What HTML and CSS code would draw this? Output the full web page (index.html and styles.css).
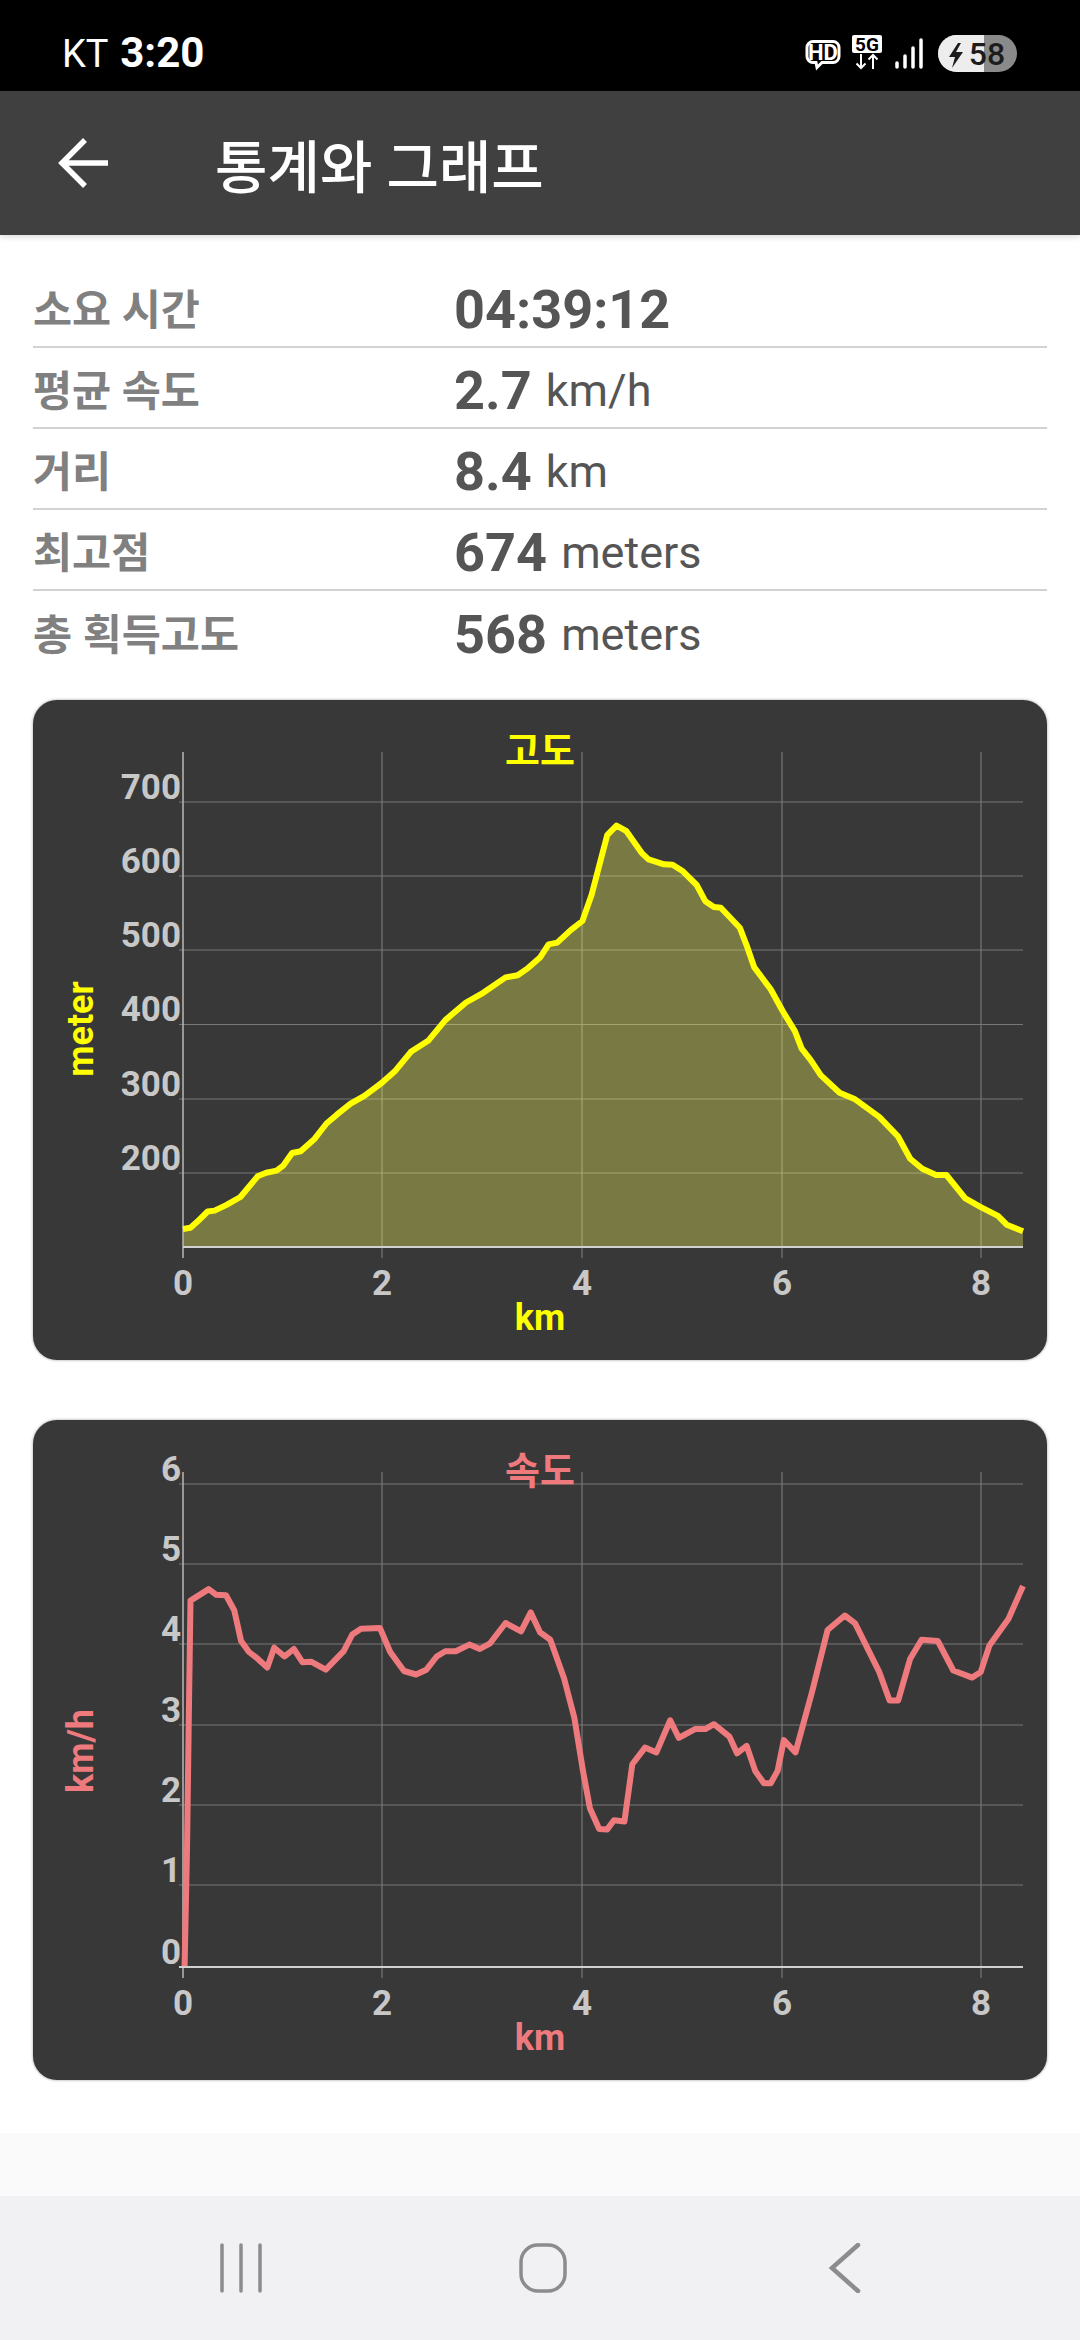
FILE: index.html
```html
<!DOCTYPE html>
<html lang="ko">
<head>
    <meta charset="UTF-8">
    <meta name="viewport" content="width=device-width, initial-scale=1.0">
    <title>통계와 그래프</title>
    <link rel="stylesheet" href="styles.css">
</head>
<body>
    <div class="status-bar">
        <div class="status-left"><span class="carrier">KT</span> <span class="clock">3:20</span></div>
        <svg class="status-icons" viewBox="800 30 222 46" width="222" height="46">
            <path class="hd-bubble" d="M813 41.500h20a6 6 0 0 1 6 6v9a6 6 0 0 1-6 6h-11l-5 5-1-5h-3a6 6 0 0 1-6-6v-9a6 6 0 0 1 6-6z"/>
            <text class="hd-text" x="823" y="60" text-anchor="middle">HD</text>
            <rect class="fiveg-box" x="852" y="35" width="30" height="18" rx="2"/>
            <text class="fiveg-text" x="867" y="51" text-anchor="middle">5G</text>
            <path class="net-arrows" d="M861 54v14m-4.500-4.500l4.500 4.500 4.500-4.500M873 69v-14m-4.500 4.500l4.500-4.500 4.500 4.500"/>
            <path class="signal" d="M897 63v4M905 56v11M913 48v19M921 40v27"/>
            <rect class="batt-dark" x="938" y="35" width="79" height="37" rx="18.500"/>
            <path class="batt-light" d="M956.500 35H984V72H956.500a18.500 18.500 0 0 1 0-37z"/>
            <path class="batt-bolt" d="M958 43l-9 14h6l-3 11 11-16h-7l5-9z"/>
            <text class="batt-text" x="987" y="65" text-anchor="middle">58</text>
        </svg>
    </div>

    <div class="toolbar">
        <svg class="back-icon" viewBox="0 0 52 52" width="52" height="52">
            <path d="M50 26H5M27 3L4 26l23 23"/>
        </svg>
        <h1 class="toolbar-title">통계와 그래프</h1>
    </div>

    <main class="content">
        <div class="stats">
            <div class="stat-row">
                <span class="stat-label">소요 시간</span>
                <span class="stat-value"><b>04:39:12</b></span>
            </div>
            <div class="stat-row">
                <span class="stat-label">평균 속도</span>
                <span class="stat-value"><b>2.7</b> <span class="stat-unit">km/h</span></span>
            </div>
            <div class="stat-row">
                <span class="stat-label">거리</span>
                <span class="stat-value"><b>8.4</b> <span class="stat-unit">km</span></span>
            </div>
            <div class="stat-row">
                <span class="stat-label">최고점</span>
                <span class="stat-value"><b>674</b> <span class="stat-unit">meters</span></span>
            </div>
            <div class="stat-row">
                <span class="stat-label">총 획득고도</span>
                <span class="stat-value"><b>568</b> <span class="stat-unit">meters</span></span>
            </div>
        </div>

        <!-- elevation chart, viewBox uses screen coordinates -->
        <div class="chart-card">
            <svg class="chart" viewBox="33 700 1014 660" width="1014" height="660">
                <path class="grid" d="M179 802H1023M179 876H1023M179 950H1023M179 1024.500H1023M179 1099H1023M179 1173H1023"/>
                <path class="grid" d="M382 752V1258M582 752V1258M782 752V1258M981 752V1258"/>
                <polygon class="elev-fill" points="183,1229 190.500,1227.800 197.400,1221.600 207.700,1211.500 214.600,1210.600 226.600,1204.900 240.400,1197 257.600,1176.300 266.200,1172.800 276.600,1170.600 283.500,1165.300 292.100,1153 300.700,1151.200 314.500,1138.900 326.500,1123.500 336.800,1114.700 350.600,1103.700 364.400,1095.800 381.600,1083 395.400,1070.700 410.900,1051.800 428.100,1040.800 445.300,1020.100 466,1002.500 483.200,992.800 505.600,977.400 517.700,975.200 528,968.100 540,957.600 548.600,944.400 557.200,942.600 571,929.900 582.400,921 591.700,894.600 600.300,861.600 607.200,835.200 616.500,825.600 626.100,830.800 641.600,852.800 648.500,859.400 664,864.300 672.600,864.700 682.900,871.300 696.700,885 705.300,901.200 713.900,907 720.800,907.800 739.800,927.700 746.600,945.300 754.200,967.300 770.700,989.300 782.800,1011.300 794.900,1031.100 801.700,1048.700 810.400,1059.700 820.700,1075.100 839.600,1092.700 855.100,1099.300 879.200,1116.900 898.200,1136.700 910.200,1158.700 922.300,1168.800 936.100,1175 946.400,1175 965.300,1198.300 980.800,1207.100 998,1215.900 1006.700,1224.700 1023,1231.300 1023,1247 183,1247"/>
                <path class="axis-y" d="M183 752V1258"/>
                <path class="axis-x" d="M183 1247H1023"/>
                <polyline class="line line-elev" points="183,1229 190.500,1227.800 197.400,1221.600 207.700,1211.500 214.600,1210.600 226.600,1204.900 240.400,1197 257.600,1176.300 266.200,1172.800 276.600,1170.600 283.500,1165.300 292.100,1153 300.700,1151.200 314.500,1138.900 326.500,1123.500 336.800,1114.700 350.600,1103.700 364.400,1095.800 381.600,1083 395.400,1070.700 410.900,1051.800 428.100,1040.800 445.300,1020.100 466,1002.500 483.200,992.800 505.600,977.400 517.700,975.200 528,968.100 540,957.600 548.600,944.400 557.200,942.600 571,929.900 582.400,921 591.700,894.600 600.300,861.600 607.200,835.200 616.500,825.600 626.100,830.800 641.600,852.800 648.500,859.400 664,864.300 672.600,864.700 682.900,871.300 696.700,885 705.300,901.200 713.900,907 720.800,907.800 739.800,927.700 746.600,945.300 754.200,967.300 770.700,989.300 782.800,1011.300 794.900,1031.100 801.700,1048.700 810.400,1059.700 820.700,1075.100 839.600,1092.700 855.100,1099.300 879.200,1116.900 898.200,1136.700 910.200,1158.700 922.300,1168.800 936.100,1175 946.400,1175 965.300,1198.300 980.800,1207.100 998,1215.900 1006.700,1224.700 1023,1231.300"/>
                <g class="tick tick-y">
                    <text x="181" y="799">700</text>
                    <text x="181" y="873">600</text>
                    <text x="181" y="947">500</text>
                    <text x="181" y="1021">400</text>
                    <text x="181" y="1096">300</text>
                    <text x="181" y="1170">200</text>
                </g>
                <g class="tick tick-x">
                    <text x="183" y="1295">0</text>
                    <text x="382" y="1295">2</text>
                    <text x="582" y="1295">4</text>
                    <text x="782" y="1295">6</text>
                    <text x="981" y="1295">8</text>
                </g>
                <text class="chart-title title-elev" x="540" y="764">고도</text>
                <text class="axis-name title-elev" x="540" y="1330">km</text>
                <text class="axis-name title-elev" transform="translate(93 1029) rotate(-90)">meter</text>
            </svg>
        </div>

        <!-- speed chart -->
        <div class="chart-card">
            <svg class="chart" viewBox="33 1420 1014 660" width="1014" height="660">
                <path class="grid" d="M179 1484H1023M179 1564H1023M179 1644H1023M179 1725H1023M179 1805H1023M179 1885H1023"/>
                <path class="grid" d="M382 1472V1978M582 1472V1978M782 1472V1978M981 1472V1978"/>
                <path class="axis-y" d="M183 1472V1978"/>
                <path class="axis-x" d="M179 1967H1023"/>
                <polyline class="line line-speed" points="184.600,1966 187,1850 188.800,1718 190.500,1600.600 208.700,1589.100 216.300,1594.800 226,1595.300 234.200,1610.200 241.100,1641 249,1652 257.600,1658.700 267.300,1667.500 274.200,1647.700 284.500,1656.500 293.800,1649 302.400,1662.200 311,1661.700 325.800,1669.700 343.700,1651.200 352.300,1634.500 361,1628.700 379.900,1627.900 390.200,1652 404,1671 416,1674.500 426.400,1669.700 436.700,1656.500 445.300,1651.200 455.700,1651.200 469.400,1644.600 479.800,1649 490.100,1643.300 505.600,1623 521.100,1631.400 530.700,1612.400 540,1632.200 550.300,1639.700 564.100,1678.500 574.400,1718 583,1770.900 589.900,1808.300 599.200,1829 607.200,1829.400 614,1820.200 624.400,1821.500 632.300,1764.300 645,1747.600 656.400,1752.400 670.200,1720.300 678.800,1737.900 695,1729.100 705.300,1729.100 713.900,1724.200 729.400,1736.600 737,1753.300 746.600,1745.800 755.200,1770.900 763.900,1783.200 770.700,1783.200 777.600,1770.900 783.800,1740.100 795.500,1752.400 812.100,1691.700 827.600,1630 844.800,1615.500 855.100,1623.400 879.200,1671.900 889.600,1700.500 898.200,1700.500 910.200,1658.700 921.600,1639.700 937.800,1641 953.300,1670.500 972.200,1677.600 980.800,1671.900 989.400,1645.500 1008.400,1619 1023,1586"/>
                <g class="tick tick-y">
                    <text x="181" y="1481">6</text>
                    <text x="181" y="1561">5</text>
                    <text x="181" y="1641">4</text>
                    <text x="181" y="1722">3</text>
                    <text x="181" y="1802">2</text>
                    <text x="181" y="1882">1</text>
                    <text x="181" y="1964">0</text>
                </g>
                <g class="tick tick-x">
                    <text x="183" y="2015">0</text>
                    <text x="382" y="2015">2</text>
                    <text x="582" y="2015">4</text>
                    <text x="782" y="2015">6</text>
                    <text x="981" y="2015">8</text>
                </g>
                <text class="chart-title title-speed" x="540" y="1484">속도</text>
                <text class="axis-name title-speed" x="540" y="2050">km</text>
                <text class="axis-name title-speed" transform="translate(93 1751) rotate(-90)">km/h</text>
            </svg>
        </div>
    </main>

    <div class="footer-strip"></div>

    <div class="nav-bar">
        <svg class="nav-icon" viewBox="0 0 50 50" width="50" height="50">
            <path d="M6 2V48M25 2V48M44 2V48"/>
        </svg>
        <svg class="nav-icon" viewBox="0 0 50 50" width="50" height="50">
            <rect x="3" y="2" width="44" height="46" rx="17"/>
        </svg>
        <svg class="nav-icon" viewBox="0 0 50 50" width="50" height="50">
            <path d="M38 2L12 25l26 23" class="nav-back"/>
        </svg>
    </div>
</body>
</html>
```

FILE: styles.css
```css
* {
    box-sizing: border-box;
}
body {
    margin: 0;
    width: 1080px;
    height: 2340px;
    display: flex;
    flex-direction: column;
    background-color: #ffffff;
    font-family: Roboto, "Noto Sans CJK KR", sans-serif;
    overflow: hidden;
}

/* status bar */
.status-bar {
    height: 91px;
    background-color: #000000;
    color: #ffffff;
    display: flex;
    justify-content: space-between;
    flex-shrink: 0;
}
.status-left {
    padding: 29px 0 0 62px;
    font-size: 38px;
    line-height: 48px;
}
.clock {
    font-weight: 700;
    font-size: 42px;
    margin-left: 3px;
}
.status-icons {
    margin: 30px 58px 0 0;
}
.hd-bubble {
    fill: none;
    stroke: #ffffff;
    stroke-width: 3;
}
.hd-text {
    font-size: 22px;
    font-weight: 700;
    fill: #ffffff;
}
.fiveg-box {
    fill: #ffffff;
}
.fiveg-text {
    font-size: 19px;
    font-weight: 700;
    fill: #000000;
}
.net-arrows {
    fill: none;
    stroke: #ffffff;
    stroke-width: 2;
}
.signal {
    fill: none;
    stroke: #ffffff;
    stroke-width: 3.500;
    stroke-linecap: round;
}
.batt-dark {
    fill: #8a8a8a;
}
.batt-light {
    fill: #ededed;
}
.batt-bolt {
    fill: #1c1c1c;
}
.batt-text {
    font-size: 32px;
    font-weight: 500;
    fill: #1c1c1c;
}

/* toolbar */
.toolbar {
    height: 144px;
    background-color: #404040;
    display: flex;
    align-items: center;
    padding-left: 58px;
    box-shadow: 0 2px 6px rgba(0, 0, 0, 0.15);
    position: relative;
    flex-shrink: 0;
}
.back-icon {
    fill: none;
    stroke: #ffffff;
    stroke-width: 5.500;
}
.toolbar-title {
    margin: 0 0 0 105px;
    font-size: 57px;
    font-weight: 500;
    color: #ffffff;
}

/* stats */
.content {
    flex: 1;
    min-height: 0;
    padding: 32px 33px 0;
}
.stat-row {
    height: 81px;
    display: flex;
    align-items: center;
    border-bottom: 2.500px solid #d2d2d2;
}
.stat-row:last-child {
    border-bottom: none;
}
.stat-label {
    width: 421px;
    font-size: 42.500px;
    font-weight: 700;
    color: #808080;
}
.stat-value {
    font-size: 45px;
    color: #555555;
    padding-top: 5px;
}
.stat-value b {
    font-size: 54px;
    font-weight: 700;
    margin-right: 3px;
}
.stat-unit {
    vertical-align: 3px;
}

/* charts */
.chart-card {
    width: 1014px;
    height: 660px;
    margin-top: 60px;
    background-color: #383838;
    border-radius: 24px;
    box-shadow: 0 0 3px rgba(0, 0, 0, 0.4);
}
.stats + .chart-card {
    margin-top: 28px;
}
.chart {
    display: block;
}
.grid {
    fill: none;
    stroke: #777777;
    stroke-width: 1.200;
}
.axis-y {
    fill: none;
    stroke: #b8b8b8;
    stroke-width: 1.500;
}
.axis-x {
    fill: none;
    stroke: #d0d0d0;
    stroke-width: 2;
}
.elev-fill {
    fill: #ffff5f;
    fill-opacity: 0.33;
}
.line {
    fill: none;
    stroke-width: 6;
    stroke-linejoin: round;
    stroke-linecap: butt;
}
.line-elev {
    stroke: #ffff00;
}
.line-speed {
    stroke: #ef7a7d;
}
.tick text {
    font-size: 35px;
    font-weight: 700;
    fill: #c8c8c8;
}
.tick-y text {
    text-anchor: end;
}
.tick-x text {
    text-anchor: middle;
}
.chart-title {
    font-size: 38px;
    font-weight: 700;
    text-anchor: middle;
}
.axis-name {
    font-size: 36px;
    font-weight: 700;
    text-anchor: middle;
}
.title-elev {
    fill: #ffff00;
}
.title-speed {
    fill: #ef7a7d;
}

/* bottom */
.footer-strip {
    height: 63px;
    background-color: #fafafa;
    flex-shrink: 0;
}
.nav-bar {
    height: 144px;
    background-color: #f1f1f4;
    display: flex;
    align-items: flex-start;
    padding: 47px 210px 0 216px;
    justify-content: space-between;
    flex-shrink: 0;
}
.nav-icon {
    fill: none;
    stroke: #8c8c8c;
    stroke-width: 3.500;
    stroke-linecap: round;
}
.nav-back {
    stroke-width: 4.500;
}
```
